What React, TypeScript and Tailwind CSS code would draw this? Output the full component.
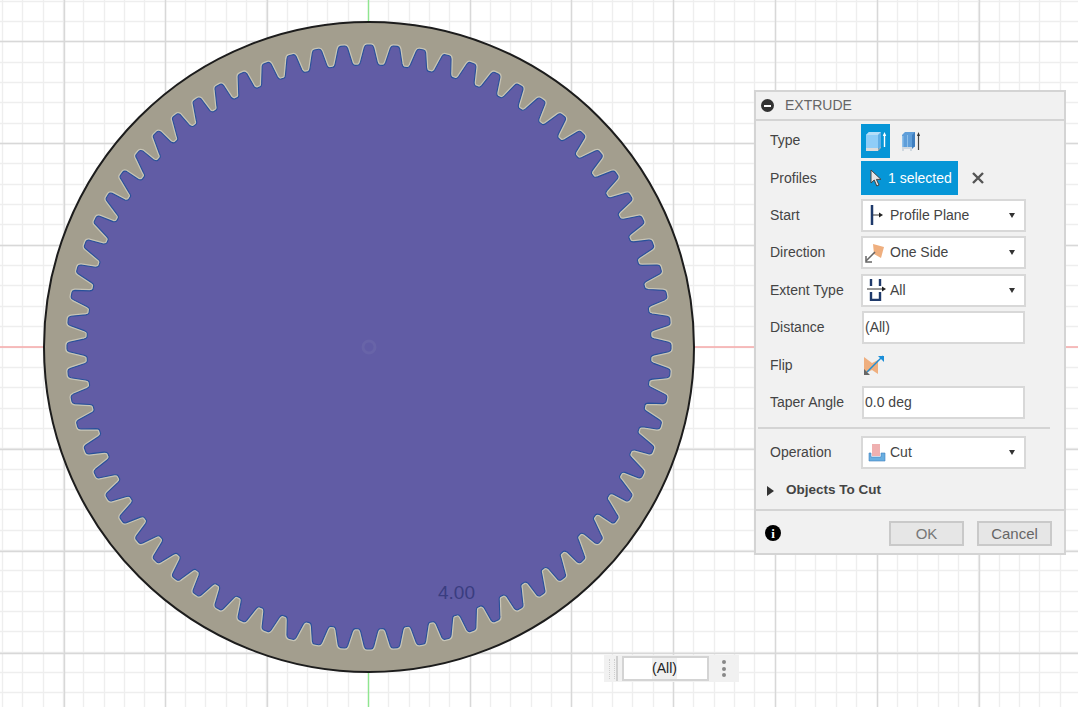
import React from "react";

const CX = 369, CY = 347, N = 72, RO = 302, RI = 282;

function gearPath() {
  const step = (Math.PI * 2) / N;
  const pt = (f: number, r: number, i: number) => {
    const t = -Math.PI / 2 + (i + f) * step;
    return `${(CX + r * Math.cos(t)).toFixed(2)} ${(CY + r * Math.sin(t)).toFixed(2)}`;
  };
  let d = "";
  for (let i = 0; i < N; i++) {
    const theta = -Math.PI / 2 + (i + 0.5) * step;
    const s = (3.5 * Math.max(0, Math.sin(2 * theta))) / 26;
    d += `${i === 0 ? "M" : "L"}${pt(-0.08, RO, i)}`;
    d += `L${pt(0.08, RO, i)}`;
    d += `Q${pt(0.15, RO, i)} ${pt(0.18, RO - 2.5, i)}`;
    d += `L${pt(0.33 - s, RI + 3, i)}`;
    d += `Q${pt(0.37 - s, RI, i)} ${pt(0.44 - s, RI, i)}`;
    d += `L${pt(0.56 - s, RI, i)}`;
    d += `Q${pt(0.63 - s, RI, i)} ${pt(0.67 - s, RI + 3, i)}`;
    d += `L${pt(0.82, RO - 2.5, i)}`;
    d += `Q${pt(0.85, RO, i)} ${pt(0.92, RO, i)}`;
  }
  return d + "Z";
}

const range = (from: number, to: number) => Array.from({ length: to - from + 1 }, (_, i) => from + i);
const minorX = range(-19, 35).map((k) => Math.floor(368.5 + k * 20.34) + 0.5);
const minorY = range(-17, 18).map((k) => Math.floor(347 + k * 20.34) + 0.5);
const majorX = [64.5, 165.5, 267.5, 470.5, 571.5, 673.5, 775.5, 877.5, 979.5];
const majorY = [41.5, 143.5, 245.5, 449.5, 551.5, 653.5];

function Canvas() {
  const d = gearPath();
  return (
    <svg className="absolute inset-0" width={1078} height={707} viewBox="0 0 1078 707">
      {minorX.map((x) => <line key={x} x1={x} x2={x} y1={0} y2={707} stroke="#eeeeee" strokeWidth={1.4} />)}
      {minorY.map((y) => <line key={y} x1={0} x2={1078} y1={y} y2={y} stroke="#eeeeee" strokeWidth={1.4} />)}
      {majorX.map((x) => <line key={x} x1={x} x2={x} y1={0} y2={707} stroke="#d8d8d8" strokeWidth={1.4} />)}
      {majorY.map((y) => <line key={y} x1={0} x2={1078} y1={y} y2={y} stroke="#d8d8d8" strokeWidth={1.4} />)}
      <line x1={0} x2={1078} y1={347} y2={347} stroke="#f6a9a9" strokeWidth={1.4} />
      <line x1={368.5} x2={368.5} y1={0} y2={707} stroke="#8fe68f" strokeWidth={1.4} />
      <circle cx={CX} cy={CY} r={325} fill="#a39e8e" stroke="#1c1c1c" strokeWidth={2} />
      <path d={d} fill="none" stroke="#c8c5b6" strokeWidth={3.6} strokeLinejoin="round" />
      <path d={d} fill="#615ca5" />
      <path d={d} fill="none" stroke="#28509a" strokeWidth={1.1} strokeLinejoin="round" />
      <circle cx={CX} cy={CY} r={6} fill="none" stroke="#6864a8" strokeWidth={3} />
    </svg>
  );
}

function Caret() {
  return <span className="ml-auto mr-[9px] h-0 w-0 border-x-[3.5px] border-t-[5px] border-x-transparent border-t-[#333]" />;
}

function Row({ label, children }: { label: string; children: React.ReactNode }) {
  return (
    <div className="flex h-[37.4px] items-center">
      <span className="w-[105px] shrink-0 pl-[14px] text-[14px] text-[#444]">{label}</span>
      {children}
    </div>
  );
}

function Select({ icon, text }: { icon: React.ReactNode; text: string }) {
  return (
    <div className="flex h-[33px] w-[165px] items-center border-2 border-[#d8d8d8] bg-white text-[14px] text-[#444]">
      <span className="flex w-[27px] shrink-0 justify-center">{icon}</span>
      <span>{text}</span>
      <Caret />
    </div>
  );
}

const inputCls = "ml-[1px] flex h-[33px] w-[163px] items-center border-2 border-[#d8d8d8] bg-white pl-[1px] text-[14px] text-[#444]";

function Panel() {
  return (
    <div className="absolute left-[754px] top-[90px] flex h-[465px] w-[312px] flex-col border-2 border-[#d4d4d4] bg-[#f1f1f1]">
      <div className="flex h-[29px] shrink-0 items-center border-b-2 border-[#d4d4d4] pl-[5px]">
        <span className="flex h-[13px] w-[13px] items-center justify-center rounded-full bg-[#333]">
          <span className="h-[2px] w-[7px] bg-white" />
        </span>
        <span className="ml-[11px] text-[14px] text-[#666]">EXTRUDE</span>
      </div>
      <div className="flex flex-col pt-[1px]">
        <Row label="Type">
          <div className="flex h-[34px] w-[29px] items-center justify-center bg-[#0696d7]">
            <svg width="23" height="24" viewBox="0 0 23 24">
              <path d="M2 6l3-3h12v16H2z" fill="#8fcdf8" />
              <path d="M2 6l3-3h12l-3 3z" fill="#b5def9" />
              <path d="M14 6l3-3v15l-3 2z" fill="#60aee6" />
              <path d="M2 19h12v3H2z" fill="#dcdcdc" />
              <path d="M14 20l3-2v1l-3 3z" fill="#a8a8a8" />
              <path d="M20.5 5v13" stroke="#fff" strokeWidth="1.4" />
              <path d="M18.8 7l1.7-4 1.7 4z" fill="#fff" />
            </svg>
          </div>
          <span className="ml-[10px] flex">
            <svg width="21" height="24" viewBox="0 0 21 24">
              <path d="M2 6l3-3h10v15H2z" fill="#5f9ed9" />
              <path d="M12 6l3-3v14l-3 3z" fill="#3f7fc0" />
              <path d="M2 7h1.5v11H2zM7 6h1v12H7z" fill="#8fc0ea" />
              <path d="M2 22v-4h10v4h-2v-2H4v2z" fill="#d0d8df" />
              <path d="M18.5 5v16" stroke="#444" strokeWidth="1.2" />
              <path d="M17 7l1.5-4L20 7z" fill="#333" />
            </svg>
          </span>
        </Row>
        <Row label="Profiles">
          <div className="flex h-[34px] w-[97px] items-center bg-[#0696d7] text-[14px] text-white">
            <svg className="ml-[9px]" width="13" height="18" viewBox="0 0 13 18">
              <path d="M1 1v13l3.2-3 2.6 6 2.2-1-2.6-5.6H11z" fill="#e6e6e6" stroke="#444" strokeWidth="1" />
            </svg>
            <span className="ml-[5px]">1 selected</span>
          </div>
          <svg className="ml-[14px]" width="12" height="12" viewBox="0 0 12 12">
            <path d="M1 1l10 10M11 1L1 11" stroke="#555" strokeWidth="2.4" />
          </svg>
        </Row>
        <Row label="Start">
          <Select text="Profile Plane" icon={
            <svg width="14" height="20" viewBox="0 0 14 20">
              <path d="M2 0v20" stroke="#1f3a6b" strokeWidth="2.5" />
              <path d="M3 10h7" stroke="#333" strokeWidth="1" />
              <path d="M9 7.5l4 2.5-4 2.5z" fill="#222" />
            </svg>
          } />
        </Row>
        <Row label="Direction">
          <Select text="One Side" icon={
            <svg className="ml-[-3px]" width="20" height="20" viewBox="0 0 20 20">
              <path d="M8 1l11 3-3 11-7-4z" fill="#efaf7f" />
              <path d="M1 18L10 9" stroke="#666" strokeWidth="1.5" />
              <path d="M1 13v6h6" fill="none" stroke="#666" strokeWidth="1.5" />
            </svg>
          } />
        </Row>
        <Row label="Extent Type">
          <Select text="All" icon={
            <svg width="20" height="22" viewBox="0 0 20 22">
              <path d="M4 0v7M13 0v7M4 13v8h9v-8" fill="none" stroke="#1f3a6b" strokeWidth="2.4" />
              <path d="M0 10h16" stroke="#333" strokeWidth="1" />
              <path d="M15 7.5l4 2.5-4 2.5z" fill="#222" />
            </svg>
          } />
        </Row>
        <Row label="Distance">
          <div className={inputCls}>(All)</div>
        </Row>
        <Row label="Flip">
          <svg className="ml-[2px]" width="22" height="22" viewBox="0 0 22 22">
            <path d="M1 3l8 6 6-3v14l-6-4-8 4z" fill="#efaf7f" />
            <path d="M4 18L20 2" stroke="#1b8ed8" strokeWidth="1.5" />
            <path d="M15 2h6v6z" fill="#1b8ed8" />
            <path d="M1 21v-6l6 6z" fill="#666" />
          </svg>
        </Row>
        <Row label="Taper Angle">
          <div className={inputCls}>0.0 deg</div>
        </Row>
      </div>
      <div className="mx-[2px] mt-[6px] h-[2px] w-[292px] bg-[#d4d4d4]" />
      <div className="mt-[5px]">
        <Row label="Operation">
          <Select text="Cut" icon={
            <svg width="18" height="20" viewBox="0 0 18 20">
              <path d="M4 1h8v12H4z" fill="#efb0b0" />
              <path d="M1 10v8h16v-8h-4v4H3v-4z" fill="#68aee0" stroke="#3f7fc0" strokeWidth=".6" />
            </svg>
          } />
        </Row>
      </div>
      <div className="mt-[1px] flex h-[36px] items-center pl-[11px]">
        <span className="h-0 w-0 border-y-[5px] border-l-[7px] border-y-transparent border-l-[#333]" />
        <span className="ml-[12px] text-[13.5px] font-bold text-[#444]">Objects To Cut</span>
      </div>
      <div className="mt-auto flex h-[44px] items-center border-t-2 border-[#d4d4d4] pr-[12px] pt-[2px]">
        <span className="ml-[9px] flex h-[16px] w-[16px] items-center justify-center rounded-full bg-black font-['Liberation_Serif',serif] text-[13px] font-bold leading-none text-white">i</span>
        <button className="ml-auto h-[25px] w-[75px] border-2 border-[#c9c9c9] bg-[#e6e6e6] text-[15px] text-[#777]">OK</button>
        <button className="ml-[13px] h-[25px] w-[75px] border-2 border-[#c9c9c9] bg-[#e6e6e6] text-[15px] text-[#666]">Cancel</button>
      </div>
    </div>
  );
}

function MiniInput() {
  return (
    <div className="absolute left-[604px] top-[655px] flex h-[27px] w-[135px] items-center bg-[#f1f1f1]">
      <div className="ml-[5px] h-[20px] w-[6px] border-x border-dotted border-[#cfcfcf]" />
      <div className="ml-[1px] h-[25px] w-[2px] bg-[#d0d0d0]" />
      <div className="ml-[4px] flex h-[25px] w-[87px] items-center justify-center border-2 border-[#d4d4d4] bg-white pr-[2px] text-[14px] text-[#222]">
        <span className="bg-[#f0f0f0]">(All)</span>
      </div>
      <div className="ml-[13px] flex flex-col gap-[2.5px]">
        <span className="h-[4px] w-[4px] rounded-full bg-[#888]" />
        <span className="h-[4px] w-[4px] rounded-full bg-[#888]" />
        <span className="h-[4px] w-[4px] rounded-full bg-[#888]" />
      </div>
    </div>
  );
}

export default function App() {
  return (
    <div className="relative h-[707px] w-[1078px] overflow-hidden bg-white font-['Liberation_Sans',Arial,sans-serif]">
      <Canvas />
      <span className="absolute left-[438px] top-[582px] text-[19px] leading-[22px] text-[#3a3d80]">4.00</span>
      <Panel />
      <MiniInput />
    </div>
  );
}
